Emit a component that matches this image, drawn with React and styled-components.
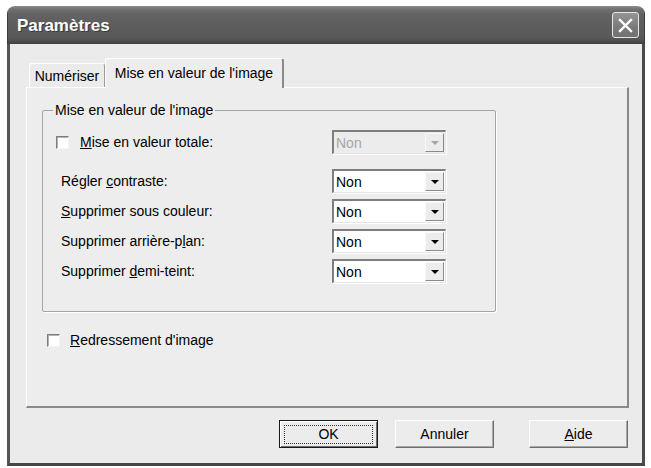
import React from "react";
import styled, { createGlobalStyle } from "styled-components";

const GlobalStyle = createGlobalStyle`
  html, body { margin: 0; padding: 0; background: #ffffff; }
  body { font-family: "Liberation Sans", Arial, sans-serif; font-size: 14px; color: #000; }
  * { box-sizing: border-box; }
`;

const Page = styled.div`
  padding: 6px 6px 0 7px;
`;

const Window = styled.div`
  width: 638px;
  height: 460px;
  display: flex;
  flex-direction: column;
  border-radius: 8px 8px 0 0;
  overflow: hidden;
`;

const TitleBar = styled.div`
  height: 38px;
  flex: none;
  display: flex;
  align-items: flex-start;
  justify-content: space-between;
  padding: 6px 5px 0 9px;
  background: linear-gradient(
    to bottom,
    #8e8e8e 0px,
    #727272 3px,
    #636363 8px,
    #5d5d5d 20px,
    #585858 32px,
    #4a4a4a 36px,
    #3f3f3f 38px
  );
  border-left: 1px solid #3c3c3c;
  border-right: 1px solid #3c3c3c;
`;

const Title = styled.span`
  font-family: "Liberation Sans", Arial, sans-serif;
  font-weight: bold;
  font-size: 17px;
  color: #ffffff;
  line-height: 20px;
  margin-top: 4px;
  text-shadow: 1px 1px 0 #3a3a3a;
`;

const CloseButton = styled.div`
  width: 27px;
  height: 26px;
  border: 1px solid #e6e6e6;
  border-radius: 3px;
  background: linear-gradient(to bottom, #959595, #7a7a7a 60%, #717171);
  display: flex;
  align-items: center;
  justify-content: center;
`;

const Body = styled.div`
  flex: 1;
  display: flex;
  flex-direction: column;
  background: #ebebeb;
  border-left: 3px solid #555555;
  border-right: 3px solid #4a4a4a;
  border-bottom: 3px solid #454545;
  padding: 14px 13px 0 16px;
`;

const TabStrip = styled.div`
  height: 29px;
  display: flex;
  align-items: flex-end;
  padding-left: 3px;
`;

const Tab = styled.div`
  position: relative;
  z-index: ${(p) => (p.$active ? 1 : 0)};
  width: ${(p) => p.$w}px;
  height: ${(p) => (p.$active ? 30 : 24)}px;
  margin-bottom: ${(p) => (p.$active ? -1 : 0)}px;
  display: flex;
  align-items: center;
  justify-content: center;
  padding-bottom: ${(p) => (p.$active ? 2 : 0)}px;
  background: ${(p) => (p.$active ? "#ededed" : "#ebebeb")};
  border-top: 1px solid #ffffff;
  border-left: 1px solid #ffffff;
  border-right: ${(p) => (p.$active ? "2px solid #8a8a8a" : "1px solid #9a9a9a")};
  border-radius: 3px 3px 0 0;
  white-space: nowrap;
`;

const Panel = styled.div`
  height: 321px;
  background: #ededed;
  border-top: 1px solid #ffffff;
  border-left: 1px solid #ffffff;
  border-right: 2px solid #8a8a8a;
  border-bottom: 2px solid #8a8a8a;
  padding: 14px 0 0 15px;
`;

const Group = styled.fieldset`
  margin: 0;
  width: 454px;
  padding: 0 0 28px 0;
  border: 1px solid #a4a4a4;
  box-shadow: 1px 1px 0 #ffffff;
  border-radius: 2px;
`;

const Legend = styled.legend`
  margin-left: 10px;
  padding: 0 2px;
  line-height: 16px;
`;

const Rows = styled.div`
  padding-top: 12px;
  display: flex;
  flex-direction: column;
  gap: 6px;
`;

const Row = styled.div`
  width: 403px;
  height: 24px;
  display: flex;
  align-items: center;
  padding-left: ${(p) => p.$indent}px;
  margin-bottom: ${(p) => p.$after || 0}px;
`;

const Label = styled.span`
  flex: 1;
  white-space: nowrap;
`;

const Check = styled.span`
  width: 13px;
  height: 13px;
  flex: none;
  background: #ffffff;
  border-top: 1px solid #7c7c7c;
  border-left: 1px solid #7c7c7c;
  border-right: 1px solid #f4f4f4;
  border-bottom: 1px solid #f4f4f4;
  box-shadow: inset 1px 1px 0 #b4b4b4;
  margin-right: ${(p) => p.$gap}px;
`;

const Combo = styled.div`
  width: 114px;
  height: 24px;
  flex: none;
  display: flex;
  align-items: stretch;
  background: ${(p) => (p.$disabled ? "#ececec" : "#ffffff")};
  color: ${(p) => (p.$disabled ? "#a6a6a6" : "#000000")};
  border-top: 2px solid #7e7e7e;
  border-left: 2px solid #7e7e7e;
  border-right: 1px solid #e4e4e4;
  border-bottom: 1px solid #e4e4e4;
  box-shadow: 1px 1px 0 #ffffff;
`;

const ComboText = styled.span`
  flex: 1;
  padding-left: 2px;
  display: flex;
  align-items: center;
`;

const ComboArrow = styled.span`
  width: 19px;
  margin: 1px 1px 1px 0;
  background: #ececec;
  border-top: 1px solid #f8f8f8;
  border-left: 1px solid #f8f8f8;
  border-right: 1px solid #8a8a8a;
  border-bottom: 1px solid #8a8a8a;
  display: flex;
  align-items: center;
  justify-content: center;
`;

const Arrow = styled.span`
  width: 0;
  height: 0;
  border-left: 4px solid transparent;
  border-right: 4px solid transparent;
  border-top: 4px solid ${(p) => (p.$disabled ? "#a6a6a6" : "#000000")};
`;

const StandaloneRow = styled.div`
  height: 24px;
  margin-top: 16px;
  padding-left: 5px;
  display: flex;
  align-items: center;
`;

const Buttons = styled.div`
  margin-top: 12px;
  padding-right: 1px;
  display: flex;
  justify-content: flex-end;
`;

const Button = styled.div`
  width: 99px;
  height: 28px;
  margin-left: ${(p) => p.$ml || 0}px;
  display: flex;
  align-items: center;
  justify-content: center;
  background: #ececec;
  border: 1px solid;
  border-color: ${(p) =>
    p.$default ? "#1a1a1a" : "#ffffff #6e6e6e #6e6e6e #ffffff"};
  box-shadow: ${(p) =>
    p.$default
      ? "inset 1px 1px 0 #ffffff, inset -1px -1px 0 #6e6e6e"
      : "inset -1px -1px 0 #a8a8a8"};
  position: relative;
`;

const Focus = styled.span`
  border: 1px dotted #333;
  width: 89px;
  height: 19px;
  display: flex;
  align-items: center;
  justify-content: center;
`;

function ComboBox({ disabled }) {
  return (
    <Combo $disabled={disabled}>
      <ComboText>Non</ComboText>
      <ComboArrow>
        <Arrow $disabled={disabled} />
      </ComboArrow>
    </Combo>
  );
}

export default function App() {
  return (
    <>
      <GlobalStyle />
      <Page>
        <Window>
          <TitleBar>
            <Title>Paramètres</Title>
            <CloseButton>
              <svg width="15" height="15" viewBox="0 0 15 15">
                <path
                  d="M2 2 L13 13 M13 2 L2 13"
                  stroke="#ffffff"
                  strokeWidth="2.4"
                  strokeLinecap="square"
                />
              </svg>
            </CloseButton>
          </TitleBar>
          <Body>
            <TabStrip>
              <Tab $w={76}>Numériser</Tab>
              <Tab $w={179} $active>
                Mise en valeur de l'image
              </Tab>
            </TabStrip>
            <Panel>
              <Group>
                <Legend>Mise en valeur de l'image</Legend>
                <Rows>
                  <Row $indent={13} $after={9}>
                    <Check $gap={11} />
                    <Label>
                      <u>M</u>ise en valeur totale:
                    </Label>
                    <ComboBox disabled />
                  </Row>
                  <Row $indent={18}>
                    <Label>
                      Régler <u>c</u>ontraste:
                    </Label>
                    <ComboBox />
                  </Row>
                  <Row $indent={18}>
                    <Label>
                      <u>S</u>upprimer sous couleur:
                    </Label>
                    <ComboBox />
                  </Row>
                  <Row $indent={18}>
                    <Label>
                      Supprimer arrière-p<u>l</u>an:
                    </Label>
                    <ComboBox />
                  </Row>
                  <Row $indent={18}>
                    <Label>
                      Supprimer <u>d</u>emi-teint:
                    </Label>
                    <ComboBox />
                  </Row>
                </Rows>
              </Group>
              <StandaloneRow>
                <Check $gap={10} />
                <Label>
                  <u>R</u>edressement d'image
                </Label>
              </StandaloneRow>
            </Panel>
            <Buttons>
              <Button $default>
                <Focus>OK</Focus>
              </Button>
              <Button $ml={17}>Annuler</Button>
              <Button $ml={35}>
                <span>
                  <u>A</u>ide
                </span>
              </Button>
            </Buttons>
          </Body>
        </Window>
      </Page>
    </>
  );
}
